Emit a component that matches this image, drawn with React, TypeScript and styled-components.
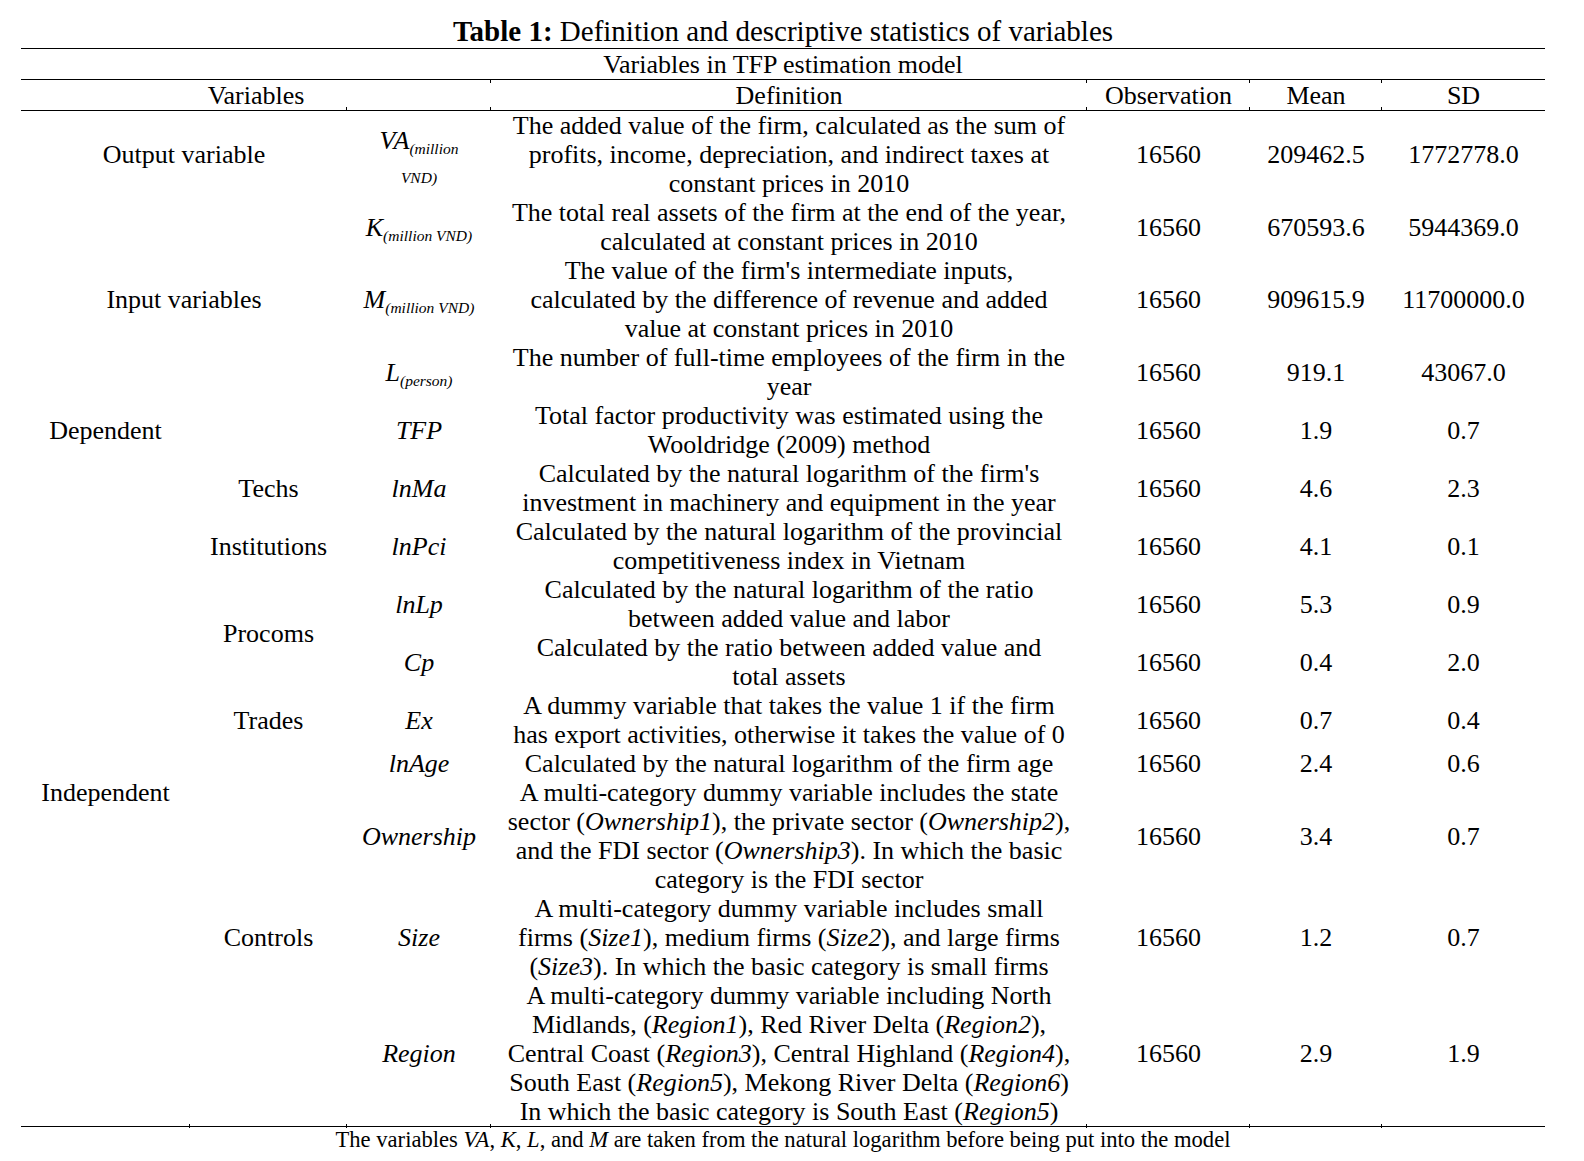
import React from "react";
import styled, { createGlobalStyle } from "styled-components";

const Global = createGlobalStyle`
  html, body { margin: 0; padding: 0; background: #fff; }
  body { font-family: "Liberation Serif", "DejaVu Serif", serif; color: #000; }
`;

const Page = styled.div`
  width: 1584px;
  padding: 0 39px 0 21px;
  box-sizing: border-box;
`;

const Title = styled.div`
  height: 48px;
  display: flex;
  align-items: flex-end;
  justify-content: center;
  font-size: 29px;
  line-height: 32px;
  padding-bottom: 1px;
  box-sizing: border-box;
  b { font-weight: 700; }
`;

const Table = styled.table`
  width: 1524px;
  border-collapse: collapse;
  table-layout: fixed;
  font-size: 26px;
  border-top: 1px solid #000;
  border-bottom: 1px solid #000;
`;

const Th = styled.th`
  font-weight: 400;
  padding: 0;
  height: 30px;
  line-height: 29px;
  text-align: center;
  vertical-align: middle;
  border-bottom: 1px solid #000;
  position: relative;
`;

const Tick = styled.span<{ $up?: boolean; $left?: number }>`
  position: absolute;
  left: ${(p) => (p.$left ?? 0) - 1}px;
  width: 1px;
  height: 3px;
  background: #000;
  ${(p) => (p.$up ? "bottom: 0;" : "top: 0;")}
`;

const FootCell = styled.td`
  padding: 0;
  height: 0;
  position: relative;
`;

const FootTick = styled.span`
  position: absolute;
  left: -1px;
  top: -2px;
  width: 1px;
  height: 4px;
  background: #000;
`;

const Td = styled.td<{ $lines?: number }>`
  padding: 0;
  line-height: 29px;
  text-align: center;
  vertical-align: middle;
  height: ${(p) => (p.$lines ?? 1) * 29}px;
  white-space: nowrap;
`;

const Sym = styled.i`
  font-style: italic;
`;

const Sub = styled.sub`
  font-size: 15.5px;
  font-style: italic;
  vertical-align: -5px;
  line-height: 0;
`;

const Note = styled.div`
  text-align: center;
  font-size: 22.6px;
  line-height: 26px;
  width: 1524px;
  i { font-style: italic; }
`;

const widths = [169, 157, 144, 596, 163, 132, 163];

const Cols = () => (
  <colgroup>
    {widths.map((w, i) => (
      <col key={i} style={{ width: w }} />
    ))}
  </colgroup>
);

type Row = {
  sym: React.ReactNode;
  def: React.ReactNode[];
  obs: string;
  mean: string;
  sd: string;
};

const L = (...parts: React.ReactNode[]) => <>{parts}</>;

const rows: Row[] = [
  {
    sym: (
      <>
        <Sym>VA</Sym>
        <Sub>(million</Sub>
        <br />
        <Sub>VND)</Sub>
      </>
    ),
    def: [
      "The added value of the firm, calculated as the sum of",
      "profits, income, depreciation, and indirect taxes at",
      "constant prices in 2010",
    ],
    obs: "16560",
    mean: "209462.5",
    sd: "1772778.0",
  },
  {
    sym: (
      <>
        <Sym>K</Sym>
        <Sub>(million VND)</Sub>
      </>
    ),
    def: ["The total real assets of the firm at the end of the year,", "calculated at constant prices in 2010"],
    obs: "16560",
    mean: "670593.6",
    sd: "5944369.0",
  },
  {
    sym: (
      <>
        <Sym>M</Sym>
        <Sub>(million VND)</Sub>
      </>
    ),
    def: [
      "The value of the firm's intermediate inputs,",
      "calculated by the difference of revenue and added",
      "value at constant prices in 2010",
    ],
    obs: "16560",
    mean: "909615.9",
    sd: "11700000.0",
  },
  {
    sym: (
      <>
        <Sym>L</Sym>
        <Sub>(person)</Sub>
      </>
    ),
    def: ["The number of full-time employees of the firm in the", "year"],
    obs: "16560",
    mean: "919.1",
    sd: "43067.0",
  },
  {
    sym: <Sym>TFP</Sym>,
    def: ["Total factor productivity was estimated using the", "Wooldridge (2009) method"],
    obs: "16560",
    mean: "1.9",
    sd: "0.7",
  },
  {
    sym: <Sym>lnMa</Sym>,
    def: ["Calculated by the natural logarithm of the firm's", "investment in machinery and equipment in the year"],
    obs: "16560",
    mean: "4.6",
    sd: "2.3",
  },
  {
    sym: <Sym>lnPci</Sym>,
    def: ["Calculated by the natural logarithm of the provincial", "competitiveness index in Vietnam"],
    obs: "16560",
    mean: "4.1",
    sd: "0.1",
  },
  {
    sym: <Sym>lnLp</Sym>,
    def: ["Calculated by the natural logarithm of the ratio", "between added value and labor"],
    obs: "16560",
    mean: "5.3",
    sd: "0.9",
  },
  {
    sym: <Sym>Cp</Sym>,
    def: ["Calculated by the ratio between added value and", "total assets"],
    obs: "16560",
    mean: "0.4",
    sd: "2.0",
  },
  {
    sym: <Sym>Ex</Sym>,
    def: ["A dummy variable that takes the value 1 if the firm", "has export activities, otherwise it takes the value of 0"],
    obs: "16560",
    mean: "0.7",
    sd: "0.4",
  },
  {
    sym: <Sym>lnAge</Sym>,
    def: ["Calculated by the natural logarithm of the firm age"],
    obs: "16560",
    mean: "2.4",
    sd: "0.6",
  },
  {
    sym: <Sym>Ownership</Sym>,
    def: [
      "A multi-category dummy variable includes the state",
      L("sector (", <Sym key="a">Ownership1</Sym>, "), the private sector (", <Sym key="b">Ownership2</Sym>, "),"),
      L("and the FDI sector (", <Sym key="c">Ownership3</Sym>, "). In which the basic"),
      "category is the FDI sector",
    ],
    obs: "16560",
    mean: "3.4",
    sd: "0.7",
  },
  {
    sym: <Sym>Size</Sym>,
    def: [
      "A multi-category dummy variable includes small",
      L("firms (", <Sym key="a">Size1</Sym>, "), medium firms (", <Sym key="b">Size2</Sym>, "), and large firms"),
      L("(", <Sym key="c">Size3</Sym>, "). In which the basic category is small firms"),
    ],
    obs: "16560",
    mean: "1.2",
    sd: "0.7",
  },
  {
    sym: <Sym>Region</Sym>,
    def: [
      "A multi-category dummy variable including North",
      L("Midlands, (", <Sym key="a">Region1</Sym>, "), Red River Delta (", <Sym key="b">Region2</Sym>, "),"),
      L("Central Coast (", <Sym key="c">Region3</Sym>, "), Central Highland (", <Sym key="d">Region4</Sym>, "),"),
      L("South East (", <Sym key="e">Region5</Sym>, "), Mekong River Delta (", <Sym key="f">Region6</Sym>, ")"),
      L("In which the basic category is South East (", <Sym key="g">Region5</Sym>, ")"),
    ],
    obs: "16560",
    mean: "2.9",
    sd: "1.9",
  },
];

// leading cells per row index
const lead: Record<number, React.ReactNode> = {
  0: <Td colSpan={2}>Output variable</Td>,
  1: (
    <Td colSpan={2} rowSpan={3}>
      Input variables
    </Td>
  ),
  4: (
    <>
      <Td>Dependent</Td>
      <Td />
    </>
  ),
  5: (
    <>
      <Td rowSpan={9}>Independent</Td>
      <Td>Techs</Td>
    </>
  ),
  6: <Td>Institutions</Td>,
  7: <Td rowSpan={2}>Procoms</Td>,
  9: <Td>Trades</Td>,
  10: <Td rowSpan={4}>Controls</Td>,
};

export default function App() {
  return (
    <Page>
      <Global />
      <Title>
        <span>
          <b>Table 1:</b> Definition and descriptive statistics of variables
        </span>
      </Title>
      <Table>
        <Cols />
        <thead>
          <tr>
            <Th colSpan={7}>Variables in TFP estimation model</Th>
          </tr>
          <tr>
            <Th colSpan={3}>
              <Tick $up $left={widths[0] + widths[1]} />
              Variables
            </Th>
            <Th>
              <Tick />
              <Tick $up />
              Definition
            </Th>
            <Th>
              <Tick />
              <Tick $up />
              Observation
            </Th>
            <Th>
              <Tick />
              <Tick $up />
              Mean
            </Th>
            <Th>
              <Tick />
              <Tick $up />
              SD
            </Th>
          </tr>
        </thead>
        <tbody>
          {rows.map((r, i) => (
            <tr key={i}>
              {lead[i]}
              <Td $lines={r.def.length}>{r.sym}</Td>
              <Td $lines={r.def.length}>
                {r.def.map((d, j) => (
                  <React.Fragment key={j}>
                    {j > 0 && <br />}
                    {d}
                  </React.Fragment>
                ))}
              </Td>
              <Td>{r.obs}</Td>
              <Td>{r.mean}</Td>
              <Td>{r.sd}</Td>
            </tr>
          ))}
        </tbody>
        <tfoot>
          <tr>
            {widths.map((_, i) => (
              <FootCell key={i}>{i > 0 && <FootTick />}</FootCell>
            ))}
          </tr>
        </tfoot>
      </Table>
      <Note>
        The variables <i>VA</i>, <i>K</i>, <i>L</i>, and <i>M</i> are taken from the natural logarithm before being put
        into the model
      </Note>
    </Page>
  );
}
